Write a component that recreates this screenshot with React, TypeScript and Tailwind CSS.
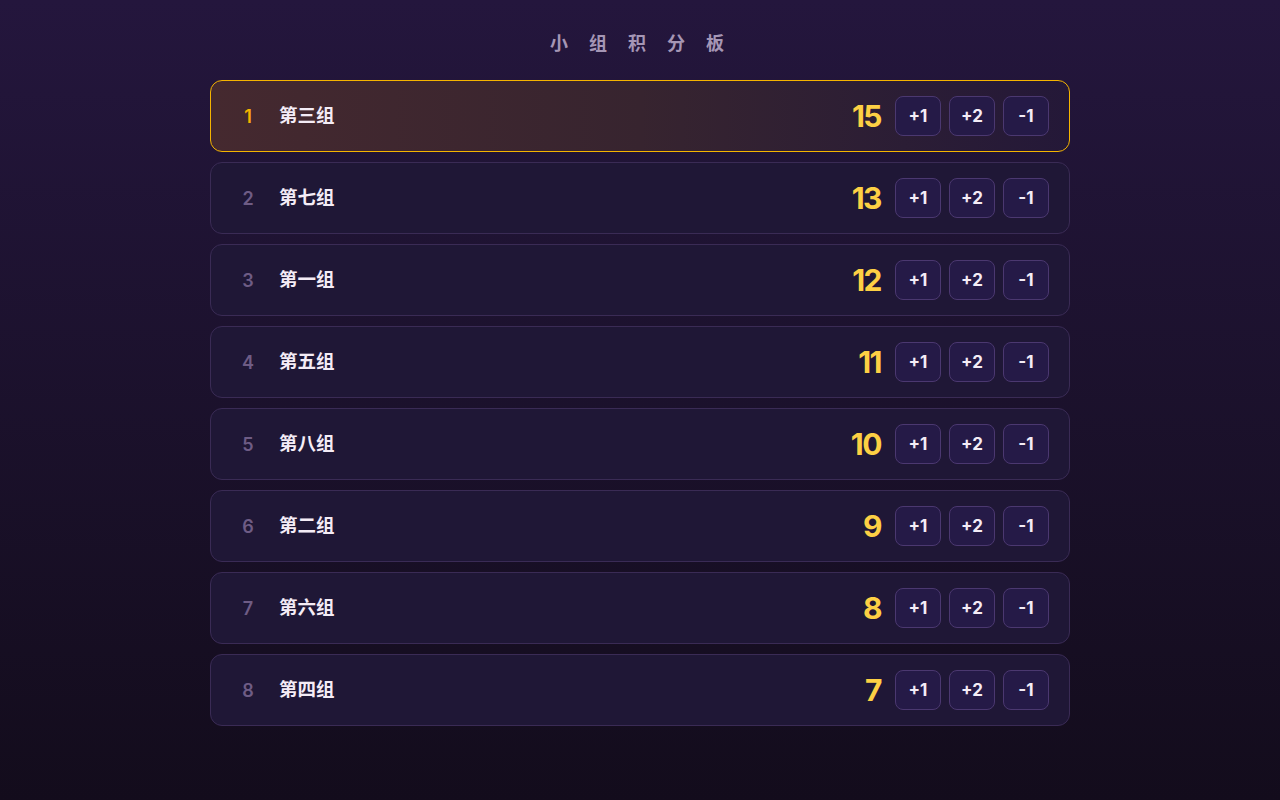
import React from "react";

const teams = [
  { name: "第三组", score: 15 },
  { name: "第七组", score: 13 },
  { name: "第一组", score: 12 },
  { name: "第五组", score: 11 },
  { name: "第八组", score: 10 },
  { name: "第二组", score: 9 },
  { name: "第六组", score: 8 },
  { name: "第四组", score: 7 },
];

const font = { fontFamily: 'Inter, "Noto Sans CJK SC", sans-serif' };

export default function App() {
  return (
    <div
      className="min-h-[800px] w-full bg-gradient-to-b from-[#24163d] to-[#130c1c] flex flex-col items-center"
      style={font}
    >
      <h1 className="mt-[31px] text-[18px] leading-[26px] font-bold text-[#a596b5] tracking-[21px] pl-[15px]">
        小组积分板
      </h1>
      <div className="mt-[23px] w-[860px] flex flex-col gap-[10px]">
        {teams.map((t, i) => {
          const first = i === 0;
          return (
            <div
              key={t.name}
              className={
                first
                  ? "h-[72px] rounded-[12px] border border-[#f5b400] bg-gradient-to-r from-[#45292f] via-[#37242f] to-[#241838] flex items-center pl-[21px] pr-[20px]"
                  : "h-[72px] rounded-[12px] border border-[#3a2b55] bg-[#1f1736] flex items-center pl-[21px] pr-[20px]"
              }
            >
              <div
                className={
                  first
                    ? "w-8 text-center text-[18px] font-semibold text-[#f5b400]"
                    : "w-8 text-center text-[18px] font-semibold text-[#6e5c85]"
                }
              >
                {i + 1}
              </div>
              <div className="ml-[15px] text-[18.5px] font-bold text-[#f4ecf6]">{t.name}</div>
              <div className="ml-auto text-[30px] font-bold text-[#fdd044] tracking-[-1.5px] leading-none">
                {t.score}
              </div>
              <div className="ml-[14px] flex gap-[8px]">
                {["+1", "+2", "-1"].map((b) => (
                  <button
                    key={b}
                    className="w-[46px] h-[40px] rounded-[8px] border border-[#4b3870] bg-[#251a47] text-[17px] pt-px font-bold text-[#f4ecf6]"
                  >
                    {b}
                  </button>
                ))}
              </div>
            </div>
          );
        })}
      </div>
    </div>
  );
}
